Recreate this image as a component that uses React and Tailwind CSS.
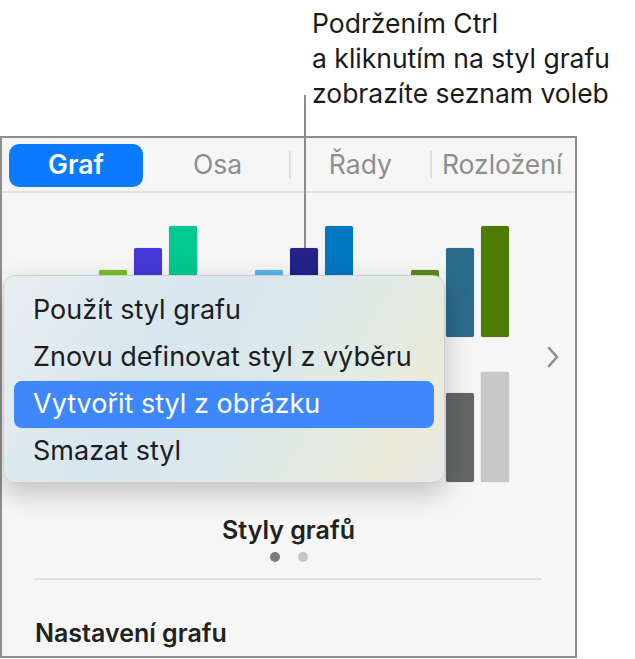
import React from "react";

const FONT = { fontFamily: "Inter, 'Noto Sans', 'Liberation Sans', sans-serif" };

function Bar({ h, color }) {
  return (
    <div
      className={`w-[28px] rounded-[2px] shadow-[0_0_1px_rgba(0,0,0,0.35)] ${color} ${h}`}
    />
  );
}

function BarGroup({ bars }) {
  return (
    <div className="flex items-end gap-[7px]">
      {bars.map((b, i) => (
        <Bar key={i} h={b[0]} color={b[1]} />
      ))}
    </div>
  );
}

const ROW1 = [
  [["h-[67px]", "bg-[#76c41c]"], ["h-[89px]", "bg-[#4538d8]"], ["h-[111px]", "bg-[#00c88e]"]],
  [["h-[67px]", "bg-[#55b8ec]"], ["h-[89px]", "bg-[#23228a]"], ["h-[111px]", "bg-[#0077c1]"]],
  [["h-[67px]", "bg-[#5b8911]"], ["h-[89px]", "bg-[#2b6b8b]"], ["h-[111px]", "bg-[#4b7b00]"]],
];

const ROW2 = [
  [["h-[67px]", "bg-[#9a9a9a]"], ["h-[89px]", "bg-[#7b7b7b]"], ["h-[110px]", "bg-[#b5b5b5]"]],
  [["h-[67px]", "bg-[#8c8c8c]"], ["h-[89px]", "bg-[#9f9f9f]"], ["h-[110px]", "bg-[#bcbcbc]"]],
  [["h-[67px]", "bg-[#4a4a4a]"], ["h-[89px]", "bg-[#646666]"], ["h-[110px]", "bg-[#c8c8c8]"]],
];

const MENU = [
  "Použít styl grafu",
  "Znovu definovat styl z výběru",
  "Vytvořit styl z obrázku",
  "Smazat styl",
];

export default function App() {
  return (
    <div className="relative w-[635px] h-[659px] bg-white overflow-hidden" style={FONT}>
      {/* Callout */}
      <div className="h-[136px] pl-[312px] pt-[6px] text-[26.5px] leading-[35px] text-[#1a1a1a] whitespace-nowrap">
        <div>Podržením Ctrl</div>
        <div>a kliknutím na styl grafu</div>
        <div>zobrazíte seznam voleb</div>
      </div>

      {/* Inspector panel */}
      <div className="w-[577px] h-[522px] border-2 border-[#8d8d8d] bg-[#f6f6f6] flex flex-col">
        {/* Tabs */}
        <div className="h-[55px] grid grid-cols-4 items-center px-[3px] border-b-2 border-[#e0e0e0] text-[26.5px]">
          <div className="h-full flex items-center px-[4px] pt-[1px]">
            <div className="w-full h-[43px] rounded-[10px] bg-[#0a7aff] text-white font-semibold flex items-center justify-center">
              Graf
            </div>
          </div>
          <div className="flex items-center justify-center text-[#8e8e8e]">Osa</div>
          <div className="flex items-center justify-center text-[#8e8e8e] border-l-2 border-[#e0e0e0] h-[28px]">
            Řady
          </div>
          <div className="flex items-center justify-center text-[#8e8e8e] border-l-2 border-[#e0e0e0] h-[28px]">
            Rozložení
          </div>
        </div>

        {/* Styles */}
        <div className="flex flex-col">
          <div className="relative pt-[33px] pl-[97px] flex flex-col gap-[35px]">
            <div className="flex items-end gap-[58px]">
              {ROW1.map((g, i) => (
                <BarGroup key={i} bars={g} />
              ))}
            </div>
            <div className="flex items-end gap-[58px]">
              {ROW2.map((g, i) => (
                <BarGroup key={i} bars={g} />
              ))}
            </div>
            <svg
              className="absolute left-[543px] top-[152px]"
              width="16"
              height="24"
              viewBox="0 0 16 24"
              fill="none"
            >
              <path d="M4 3l8 9-8 9" stroke="#8e8e8e" strokeWidth="2.6" strokeLinecap="round" strokeLinejoin="round" />
            </svg>
          </div>

          <div className="mt-[33px] text-center text-[25px] leading-[30px] font-semibold text-[#222]">
            Styly grafů
          </div>
          <div className="mt-[7px] flex justify-center gap-[18px]">
            <span className="w-[10px] h-[10px] rounded-full bg-[#7b7b7b]" />
            <span className="w-[10px] h-[10px] rounded-full bg-[#c6c6c6]" />
          </div>
          <div className="mx-[33px] mt-[16px] h-[2px] bg-[#e0e0e0]" />
          <div className="mt-[38px] pl-[33px] text-[25px] leading-[30px] font-semibold text-[#222]">
            Nastavení grafu
          </div>
        </div>
      </div>

      {/* Callout leader line */}
      <div className="absolute left-[304px] top-[95px] w-[2px] h-[153px] bg-[#8a8a8a]" />

      {/* Context menu */}
      <div className="absolute left-[3px] top-[275px] w-[442px] h-[208px] rounded-[12px] border border-[#c9cfd2] shadow-[0_10px_28px_rgba(0,0,0,0.22)] bg-[linear-gradient(120deg,#e8eef1_0%,#d8e6ef_35%,#dbe8ec_55%,#e3ece2_75%,#ebe9d8_88%,#e7e9e9_100%)] pt-[11px] px-[10px] text-[27px] text-[#1d1d1f] whitespace-nowrap">
        {MENU.map((m, i) => (
          <div
            key={m}
            className={`h-[47px] flex items-center px-[19px] rounded-[8px] ${
              i === 2 ? "bg-[#3f88fc] text-white" : ""
            }`}
          >
            {m}
          </div>
        ))}
      </div>
    </div>
  );
}
